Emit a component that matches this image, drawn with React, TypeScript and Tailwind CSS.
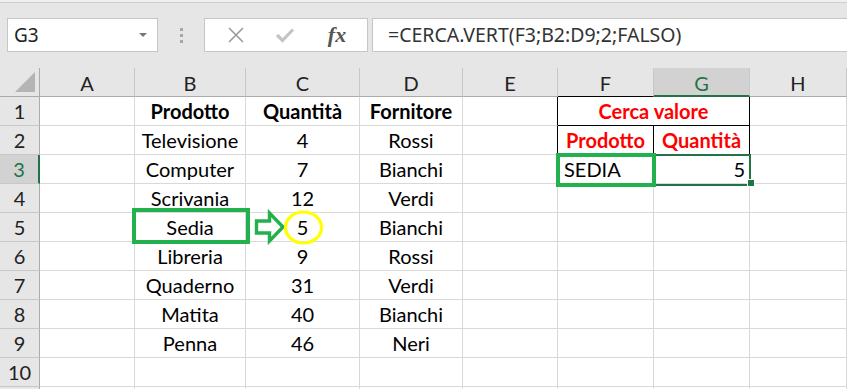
import React from "react";

const COLS = ["A", "B", "C", "D", "E", "F", "G", "H"];
const WIDTHS = [40, 95, 111, 114, 103, 95, 96, 96, 97];

const data: Record<number, { B?: string; C?: string; D?: string }> = {
  2: { B: "Televisione", C: "4", D: "Rossi" },
  3: { B: "Computer", C: "7", D: "Bianchi" },
  4: { B: "Scrivania", C: "12", D: "Verdi" },
  5: { B: "Sedia", C: "5", D: "Bianchi" },
  6: { B: "Libreria", C: "9", D: "Rossi" },
  7: { B: "Quaderno", C: "31", D: "Verdi" },
  8: { B: "Matita", C: "40", D: "Bianchi" },
  9: { B: "Penna", C: "46", D: "Neri" },
};

const cellFont = { fontFamily: "Lato, 'Open Sans', sans-serif" };

function Cell({
  children,
  className = "",
}: {
  children?: React.ReactNode;
  className?: string;
}) {
  return (
    <div
      className={
        "h-[29px] flex items-center overflow-visible whitespace-nowrap text-[20px] text-black border-b border-r " +
        className
      }
    >
      {children}
    </div>
  );
}

export default function App() {
  const rows = [1, 2, 3, 4, 5, 6, 7, 8, 9, 10, 11];
  return (
    <div className="w-[847px] h-[389px] overflow-hidden bg-white relative" style={cellFont}>
      {/* Formula bar area */}
      <div className="h-[68px] bg-[#e6e6e6] flex flex-col">
        <div className="h-[2px] bg-[#efefef]" />
        <div className="h-[1px] bg-[#cfcfcf]" />
        <div className="flex items-start pt-[15px] pl-[7px]">
          <div className="w-[151px] h-[34px] bg-white border border-[#c6c6c6] flex items-center justify-between pl-[6px] pr-[9px]">
            <span className="text-[19px] text-[#222]" style={{ fontFamily: "'Noto Sans', sans-serif" }}>
              G3
            </span>
            <svg width="10" height="6" viewBox="0 0 10 6">
              <path d="M1 1 L9 1 L5 5 Z" fill="#777" />
            </svg>
          </div>
          <div className="w-[46px] h-[34px] flex flex-col items-center justify-center gap-[3px]">
            <div className="w-[3px] h-[3px] bg-[#a6a6a6]" />
            <div className="w-[3px] h-[3px] bg-[#a6a6a6]" />
            <div className="w-[3px] h-[3px] bg-[#a6a6a6]" />
          </div>
          <div className="w-[164px] h-[34px] bg-white border border-[#c6c6c6] flex items-center">
            <div className="w-[58px] flex justify-center pl-[3px]">
              <svg width="18" height="18" viewBox="0 0 18 18">
                <path d="M2 2 L16 16 M16 2 L2 16" stroke="#9a9a9a" strokeWidth="1.6" />
              </svg>
            </div>
            <div className="w-[44px] flex justify-center">
              <svg width="20" height="16" viewBox="0 0 20 16">
                <path d="M2 8 L7.5 13.5 L18 2.5" stroke="#c4c4c4" strokeWidth="3.2" fill="none" />
              </svg>
            </div>
            <div className="w-[60px] flex justify-center">
              <span
                className="text-[22px] italic font-bold text-[#555] leading-none"
                style={{ fontFamily: "'Liberation Serif', serif" }}
              >
                fx
              </span>
            </div>
          </div>
          <div className="flex-1 ml-[4px] h-[34px] bg-white border border-[#c6c6c6] border-r-0 flex items-center pl-[15px]">
            <span className="text-[19.5px] text-[#333]" style={{ fontFamily: "'Noto Sans', sans-serif" }}>
              =CERCA.VERT(F3;B2:D9;2;FALSO)
            </span>
          </div>
        </div>
      </div>

      {/* Grid */}
      <div
        className="grid"
        style={{ gridTemplateColumns: WIDTHS.map((w) => w + "px").join(" ") }}
      >
        {/* header row */}
        <div className="h-[29px] bg-[#e6e6e6] border-r border-b border-[#ababab] relative">
          <svg className="absolute left-[14px] top-[4px]" width="22" height="21" viewBox="0 0 22 21">
            <path d="M1 20 L21 20 L21 0 Z" fill="#b4b4b4" />
          </svg>
        </div>
        {COLS.map((c) => (
          <div
            key={c}
            className={
              "h-[29px] flex items-center justify-center pt-[2px] text-[20px] border-r border-[#c8c8c8] " +
              (c === "G"
                ? "bg-[#d2d2d2] text-[#217346] border-b-2 border-b-[#217346]"
                : "bg-[#e6e6e6] text-[#222] border-b border-b-[#ababab]") +
              (c === "F" ? " border-b-black" : "")
            }
          >
            {c}
          </div>
        ))}

        {rows.map((r) => {
          const d = data[r] || {};
          const sel = r === 3;
          return (
            <React.Fragment key={r}>
              <div
                className={
                  "h-[29px] flex items-center justify-center text-[20px] border-b border-[#c8c8c8] " +
                  (sel
                    ? "bg-[#d2d2d2] text-[#217346] border-r-2 border-r-[#217346]"
                    : "bg-[#e6e6e6] text-[#222] border-r border-r-[#ababab]")
                }
              >
                {r <= 10 ? r : ""}
              </div>
              {/* A */}
              <Cell className="border-[#d9d9d9]" />
              {/* B */}
              <Cell className={"justify-center border-[#d9d9d9] " + (r === 1 ? "font-bold" : "")}>
                {r === 1 ? "Prodotto" : d.B}
              </Cell>
              {/* C */}
              <Cell className={"justify-center border-[#d9d9d9] " + (r === 1 ? "font-bold" : "")}>
                {r === 1 ? "Quantità" : d.C}
              </Cell>
              {/* D */}
              <Cell className={"justify-center border-[#d9d9d9] " + (r === 1 ? "font-bold" : "")}>
                {r === 1 ? "Fornitore" : d.D}
              </Cell>
              {/* E */}
              <Cell
                className={
                  "border-b-[#d9d9d9] " +
                  (r === 1 || r === 2 ? "border-r-black" : "border-r-[#d9d9d9]")
                }
              />
              {/* F & G */}
              {r === 1 ? (
                <Cell className="col-span-2 justify-center font-bold border-black">
                  <span className="text-[#ff0000]">Cerca valore</span>
                </Cell>
              ) : r === 2 ? (
                <>
                  <Cell className="justify-center font-bold border-black">
                    <span className="text-[#ff0000]">Prodotto</span>
                  </Cell>
                  <Cell className="justify-center font-bold border-black">
                    <span className="text-[#ff0000]">Quantità</span>
                  </Cell>
                </>
              ) : r === 3 ? (
                <>
                  <Cell className="pl-[6px] border-[#d9d9d9]">SEDIA</Cell>
                  <Cell className="justify-end pr-[4px] border-[#d9d9d9]">5</Cell>
                </>
              ) : (
                <>
                  <Cell className="border-[#d9d9d9]" />
                  <Cell className="border-[#d9d9d9]" />
                </>
              )}
              {/* H */}
              <Cell className="border-[#d9d9d9]" />
            </React.Fragment>
          );
        })}
      </div>

      {/* Selection of G3 */}
      <div className="absolute left-[653px] top-[154px] w-[98px] h-[32px] border-2 border-[#217346] pointer-events-none" />
      <div className="absolute left-[747px] top-[179px] w-[6px] h-[6px] bg-[#217346] border border-white box-content" />

      {/* Green box around Sedia */}
      <div className="absolute left-[132px] top-[208px] w-[118px] h-[36px] border-4 border-[#22b14c]" />
      {/* Green box around SEDIA */}
      <div className="absolute left-[556px] top-[153px] w-[100px] h-[34px] border-4 border-[#22b14c]" />

      {/* Arrow */}
      <svg className="absolute left-[253px] top-[209px]" width="34" height="36" viewBox="0 0 34 36">
        <path
          d="M3.5 12 L16.5 12 L16.5 4 L30 18 L16.5 32 L16.5 24 L3.5 24 Z"
          fill="white"
          stroke="#22b14c"
          strokeWidth="3.4"
          strokeLinejoin="miter"
        />
      </svg>

      {/* Yellow circle */}
      <svg className="absolute left-[282px] top-[209px]" width="44" height="38" viewBox="0 0 44 38">
        <ellipse cx="21.5" cy="18.5" rx="18" ry="15.5" fill="none" stroke="#ffff00" strokeWidth="3.2" />
      </svg>
    </div>
  );
}
